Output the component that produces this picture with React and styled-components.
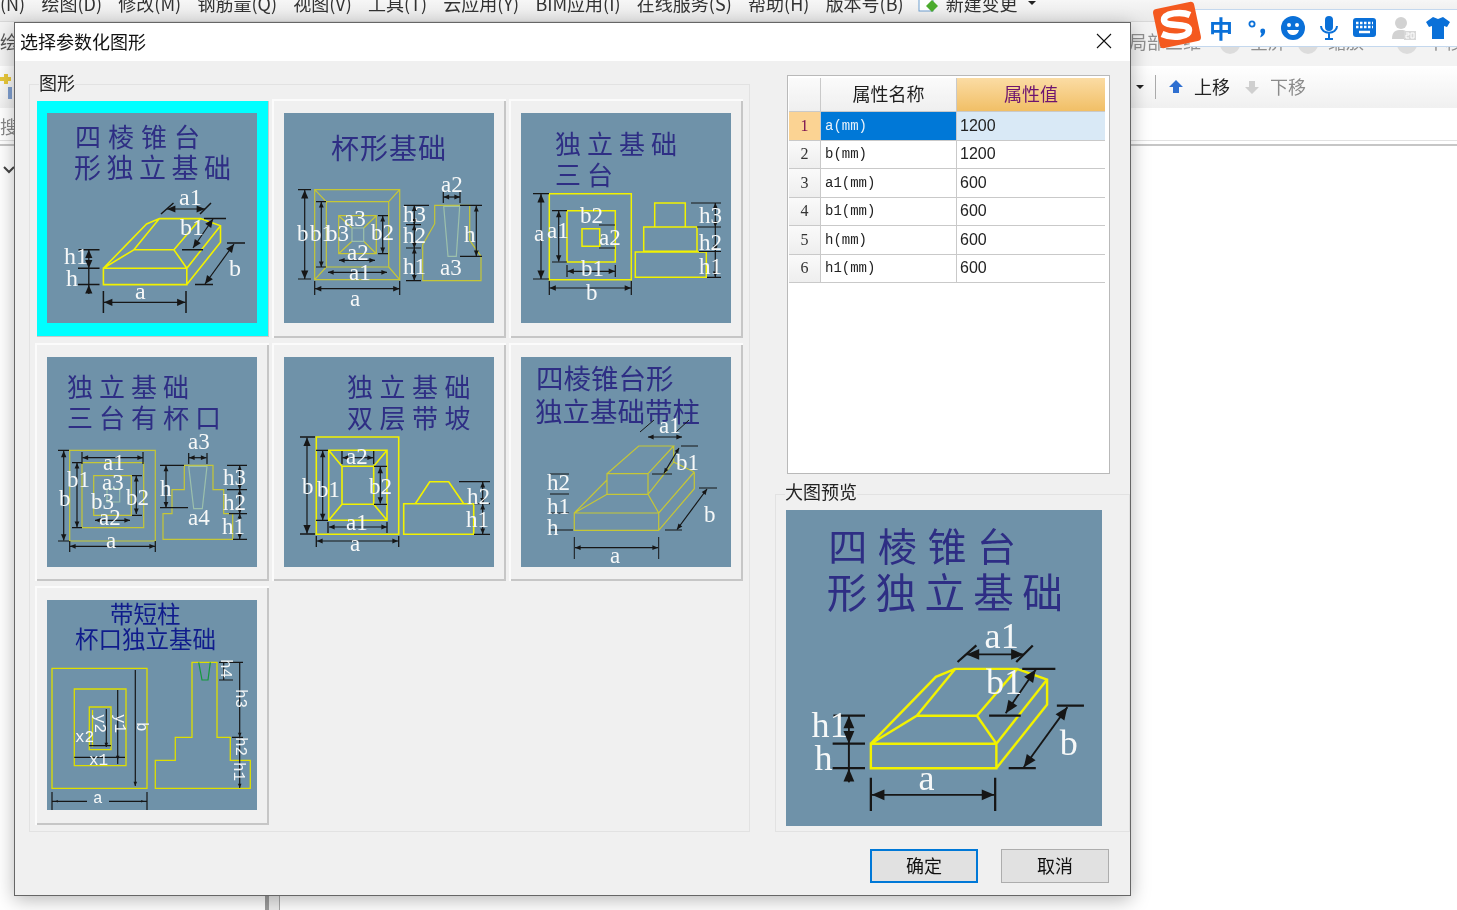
import React from 'react'
import styled, { createGlobalStyle } from 'styled-components'

const CJK = '"Noto Sans CJK SC", "Noto Sans", sans-serif'
const YELLOW = '#f2f200'
const OLIVE = '#c6c736'
const PALE = '#9cc0ac'
const INK = '#161616'

const GlobalStyle = createGlobalStyle`
  html, body { margin: 0; padding: 0; background: #fff; overflow: hidden; }
  body { font-family: ${CJK}; }
`

/* ---------- drawing helpers, all in a 210x210 space ---------- */

const Line = styled.path`
  fill: none;
  stroke: ${p => p.$c || INK};
  stroke-width: ${p => p.$w || 1.2};
`
const Head = styled.polygon`
  fill: ${INK};
`
const Dimension = styled.text`
  fill: #f6f8f8;
  font-family: "Liberation Serif", serif;
  font-size: ${p => p.$s || 23}px;
`
const Heading = styled.text`
  fill: ${p => p.$c || '#2e2e84'};
  font-family: ${CJK};
  font-size: ${p => p.$s || 26}px;
  letter-spacing: ${p => p.$sp || 0}px;
`
const Pixel = styled.text`
  fill: #f6f8f8;
  font-family: "Liberation Mono", monospace;
  font-size: 16px;
`

const Arrow = ({ x, y, fx, fy, s = 6 }) => {
  const len = Math.hypot(x - fx, y - fy) || 1
  const ux = (x - fx) / len
  const uy = (y - fy) / len
  const bx = x - ux * s * 1.4
  const by = y - uy * s * 1.4
  const nx = -uy * s * 0.6
  const ny = ux * s * 0.6
  return <Head points={`${x},${y} ${bx + nx},${by + ny} ${bx - nx},${by - ny}`} />
}

const Dim = ({ x1, y1, x2, y2, s }) => (
  <>
    <Line d={`M${x1} ${y1}L${x2} ${y2}`} />
    <Arrow x={x1} y={y1} fx={x2} fy={y2} s={s} />
    <Arrow x={x2} y={y2} fx={x1} fy={y1} s={s} />
  </>
)

const Labels = ({ items, s }) => items.map(([t, x, y]) => (
  <Dimension key={`${t}${x}${y}`} x={x} y={y} $s={s}>{t}</Dimension>
))

/* ---------- the seven foundation figures ---------- */

const Pyramid = () => (
  <>
    <Heading x="28" y="34" $sp="7">四棱锥台</Heading>
    <Heading x="27" y="65" $s="27" $sp="5.5">形独立基础</Heading>
    <Line $c={YELLOW} $w="1.6" d="M56.4 155.300H139.800V171.600H56.400ZM139.800 171.600L173.500 129.300V112.700L153.600 105.600H112.400L99.600 110.900L56.400 155.300L86.900 136.700H126.900L139.800 155.300L173.500 112.700M86.900 136.700L112.400 105.600M126.900 136.700L153.600 105.600" />
    <Line $w="1.500" d="M56.400 178V200M139 178V200M31.500 136.700H52.500M31 155.300H52.500M31 171.600H52.500M114 101L126.500 90M153 101L164 90M157 105.600H179M135 136.700H156M180 130H198M148 171.500H166" />
    <Dim x1={57} y1={189.300} x2={138.500} y2={189.300} />
    <Dim x1={41.800} y1={136.700} x2={41.800} y2={155.300} />
    <Line $w="1.300" d="M41.800 155.300V181" />
    <Arrow x={41.800} y={172} fx={41.800} fy={182} />
    <Dim x1={120} y1={96} x2={158} y2={96} />
    <Dim x1={166} y1={106} x2={146} y2={135} />
    <Dim x1={187} y1={131} x2={158} y2={171} />
    <Labels s={24} items={[['h1', 17, 151], ['h', 19, 172.700], ['a', 88, 186], ['a1', 132, 91.600], ['b1', 133, 122], ['b', 182, 163]]} />
  </>
)

const CupBase = () => (
  <>
    <Heading x="47" y="46" $s="28" $sp="1">杯形基础</Heading>
    <Line $c={OLIVE} d="M30.700 76.700H115.700V166.700H30.700ZM42.300 88.700H104.700V154H42.300ZM54.700 102.700H92.300V140.700H54.700ZM30.700 76.700L42.300 88.700M115.700 76.700L104.700 88.700M30.700 166.700L42.300 154M115.700 166.700L104.700 154M54.700 102.700L68 115M92.300 102.700L79.700 115M54.700 140.700L68 128.300M92.300 140.700L79.700 128.300M150.700 92.300H185.700V127.300L197 143.300V167.700H138.700V131.700L150.700 110.700Z" />
    <Line $c={PALE} d="M68 115H79.700V128.300H68ZM159.700 93.300H175.700L172.300 143.300H164Z" />
    <Line d="M14 76.700H27M14 166H27M32 88.700H42M32 154H42M94 102.700H104M94 140.700H104M30.700 168V182M115.700 168V182M120 92.300H145M122 111.700H137M122 135H137M122 167.700H137M176 92.300H198M176 143.300H198M159.300 79V90M176 79V90" />
    <Dim x1={20.700} y1={77} x2={20.700} y2={166} />
    <Dim x1={37.300} y1={89} x2={37.300} y2={154} s={4} />
    <Dim x1={98.700} y1={103} x2={98.700} y2={140} s={4} />
    <Dim x1={31} y1={175.700} x2={115.500} y2={175.700} s={4.500} />
    <Dim x1={44} y1={159.300} x2={103} y2={159.300} s={4} />
    <Dim x1={55} y1={147.300} x2={91} y2={147.300} s={4} />
    <Dim x1={159.500} y1={84} x2={176} y2={84} s={4} />
    <Dim x1={192.300} y1={93} x2={192.300} y2={143} s={4} />
    <Dim x1={130.300} y1={92.500} x2={130.300} y2={111.700} s={4} />
    <Dim x1={130.300} y1={111.700} x2={130.300} y2={135} s={4} />
    <Dim x1={130.300} y1={135} x2={130.300} y2={167.500} s={4} />
    <Labels items={[['b', 13, 128], ['b1', 26, 128], ['b3', 42, 128], ['a3', 60, 113], ['b2', 87, 127], ['a2', 63, 147], ['a1', 65, 167], ['a', 66, 193], ['a2', 157, 79], ['h3', 119, 109], ['h2', 119, 130], ['h1', 119, 161], ['h', 180, 129], ['a3', 156, 162]]} />
  </>
)

const ThreeStep = () => (
  <>
    <Heading x="34" y="41" $sp="6">独立基础</Heading>
    <Heading x="34" y="72" $sp="6">三台</Heading>
    <Line $c={YELLOW} $w="1.500" d="M28.300 80.700H110.300V166.700H28.300ZM46 97.700H94.300V149H46ZM61 115.700H78.700V133.300H61ZM133.700 90H164.300V114H133.700ZM122.700 114H176V138.300H122.700ZM114.300 139H185.300V164.300H114.300Z" />
    <Line d="M12 80.700H28M12 166H28M31 97.700H46M31 149H46M28.300 168V182M110.300 168V182M46 152V164M94.300 152V164M170 90H200M176 114H200M178 138.500H200M186 164.300H200M78 112H94M78 135H94" />
    <Dim x1={20} y1={81} x2={20} y2={166} />
    <Dim x1={37.700} y1={98} x2={37.700} y2={148.500} s={4.500} />
    <Dim x1={28.500} y1={175} x2={110} y2={175} s={4.500} />
    <Dim x1={46.500} y1={158.300} x2={94} y2={158.300} s={4.500} />
    <Line d="M194.300 90V164.300" />
    <Arrow x={194.300} y={90} fx={194.300} fy={114} s={4} />
    <Arrow x={194.300} y={114} fx={194.300} fy={90} s={4} />
    <Arrow x={194.300} y={138} fx={194.300} fy={116} s={4} />
    <Arrow x={194.300} y={164} fx={194.300} fy={140} s={4} />
    <Labels items={[['a', 13, 128], ['a1', 26, 125], ['b2', 59, 110], ['a2', 78, 132], ['b1', 60, 163], ['b', 65, 187], ['h3', 178, 110], ['h2', 178, 137], ['h1', 178, 161]]} />
  </>
)

const ThreeStepCup = () => (
  <>
    <Heading x="20" y="40" $sp="6">独立基础</Heading>
    <Heading x="20" y="71" $sp="6">三台有杯口</Heading>
    <Line $c={OLIVE} d="M22.700 93.300H108.300V184H22.700ZM35 105.700H96.700V170.700H35ZM46.700 118.700H84.300V158.300H46.700ZM137.300 108.300H166V132.700H176.700V156.700H185.700V182.300H116V156.700H125V132.700H137.300Z" />
    <Line $c={PALE} d="M60 131.700H72.700V145H60ZM141.700 109.300H160L155.300 151.700H146.700Z" />
    <Line d="M11 93.300H22M11 184H22M25 105.700H35M25 170.700H35M85 118.700H95M85 158.300H95M35 95V107M96 95V107M22.700 184V195M108.300 184V195M141.700 96V107M160 96V107M113 108.300H137M113 150.700H141M180 108.300H200M180 132.700H200M182 156.700H200M186 182.300H200" />
    <Dim x1={35.500} y1={100.700} x2={96} y2={100.700} s={4} />
    <Dim x1={16.700} y1={94} x2={16.700} y2={183.500} s={4.500} />
    <Dim x1={30} y1={106} x2={30} y2={170} s={4} />
    <Dim x1={89.300} y1={119} x2={89.300} y2={157} s={4} />
    <Dim x1={48} y1={163.300} x2={83} y2={163.300} s={4} />
    <Dim x1={23} y1={189.300} x2={108} y2={189.300} s={4} />
    <Dim x1={142} y1={100.700} x2={159.500} y2={100.700} s={4} />
    <Dim x1={119} y1={108.700} x2={119} y2={150.500} s={4} />
    <Dim x1={192.700} y1={108.500} x2={192.700} y2={132.700} s={3.500} />
    <Dim x1={192.700} y1={132.700} x2={192.700} y2={156.700} s={3.500} />
    <Dim x1={192.700} y1={156.700} x2={192.700} y2={182} s={3.500} />
    <Labels items={[['a3', 141, 92], ['a1', 56, 113], ['b1', 20, 130], ['a3', 55, 133], ['b3', 44, 152], ['b2', 79, 148], ['b', 12, 149], ['a2', 52, 168], ['a', 59, 191], ['h', 113, 139], ['a4', 141, 168], ['h3', 176, 128], ['h2', 176, 153], ['h1', 175, 177]]} />
  </>
)

const DoubleSlope = () => (
  <>
    <Heading x="63" y="40" $sp="6.500">独立基础</Heading>
    <Heading x="63" y="71" $sp="6.500">双层带坡</Heading>
    <Line $c={YELLOW} $w="1.600" d="M32.300 80H114.700V177.300H32.300ZM44.700 93.300H103V163.300H44.700ZM58 109.300H89.700V147.300H58ZM44.700 93.300L58 109.300M103 93.300L89.700 109.300M44.700 163.300L58 147.300M103 163.300L89.700 147.300M119.700 146.700H189.700V177.300H119.700ZM131.300 146.700L145.700 124.700H164.700L179.700 146.700" />
    <Line $w="1.300" d="M16 80H31M16 177H31M32 93.300H44M32 163.300H44M90 109.300H103M90 147.300H103M58 94V107M89.700 94V107M44 165V176M103 165V176M32.300 179V190M114.700 179V190M175 124.700H206M190 146.700H206M190 177.300H206" />
    <Dim x1={23} y1={80.500} x2={23} y2={176.500} />
    <Dim x1={38.700} y1={94} x2={38.700} y2={163} s={4.500} />
    <Dim x1={96.300} y1={110} x2={96.300} y2={146.500} s={4.500} />
    <Dim x1={58.500} y1={100.700} x2={89} y2={100.700} s={4} />
    <Dim x1={45} y1={170} x2={103} y2={170} s={4} />
    <Dim x1={33} y1={184} x2={114} y2={184} s={4} />
    <Dim x1={198.700} y1={125} x2={198.700} y2={146.500} s={4} />
    <Dim x1={198.700} y1={147} x2={198.700} y2={177} s={4} />
    <Labels items={[['b', 18, 137], ['b1', 33, 140], ['a2', 62, 107], ['b2', 85, 137], ['a1', 62, 173], ['a', 66, 194], ['h2', 183, 147], ['h1', 182, 170]]} />
  </>
)

const SlopeColumn = () => (
  <>
    <Heading x="15" y="32" $s="27.500">四棱锥台形</Heading>
    <Heading x="14" y="65" $s="27.500">独立基础带柱</Heading>
    <Line $c={OLIVE} d="M53.300 156H137.700V173.300H53.300ZM137.700 173.300L173.300 131.700V115M137.700 156L173.300 115M86 116.700H127V137.300H86ZM86 116.700L117.700 89H152.700L127 116.700M152.700 89V105L173.300 115M127 137.300L152.700 105M53.300 156L86 137.300M53.300 156L86 123M127 137.300L137.700 156" />
    <Line $w="1" d="M53.300 180V202M137.700 180V202M178 131H196M144 173H161M119 75L133 63M155 75L168 63M160 89H177M131 117H151M29 117H48M29 137H48M29 156H48M29 173H52" />
    <Dim x1={54} y1={190.700} x2={137} y2={190.700} s={4} />
    <Dim x1={186} y1={132} x2={156} y2={172.500} s={4} />
    <Dim x1={127} y1={80} x2={161} y2={80} s={4} />
    <Dim x1={158} y1={91} x2={143} y2={116} s={3.500} />
    <Labels items={[['a1', 138, 76], ['b1', 155, 113], ['b', 183, 165], ['a', 89, 206], ['h2', 26, 133], ['h1', 26, 157], ['h', 26, 178]]} />
  </>
)

const Rotated = ({ x, y, children }) => (
  <Pixel transform={`translate(${x} ${y}) rotate(90)`}>{children}</Pixel>
)

const ShortColumn = () => (
  <>
    <Heading x="63" y="23" $s="23.500" $c="#101c8c">带短柱</Heading>
    <Heading x="28" y="48" $s="23.500" $c="#101c8c">杯口独立基础</Heading>
    <Line $c="#dede00" $w="1.300" d="M5 68.300H100V188.300H5ZM27.300 89H79V165.700H27.300ZM42.300 107H64V149.700H42.300ZM45.500 110V147M108.300 188.300V160.300H128.300V137.300H145V62.300H170V137.300H183.300V160.300H203.300V188.300Z" />
    <Line $c="#149a3c" d="M151.700 62.300L155 80H161L163.300 62.300" />
    <Line d="M5 192V211M100 192V211M5 201.300H40M62 201.300H100M88.300 70V186M70.700 90V164M59.300 109V147M27.300 157.300H78M42.300 145.700H64M192.700 62.300V188M172 62.300H196M172 80H186M176.700 62.300V80M185 137.300H196" />
    <Arrow x={8} y={201.300} fx={16} fy={201.300} s={2} />
    <Arrow x={97} y={201.300} fx={88} fy={201.300} s={2} />
    <Arrow x={70.700} y={160} fx={70.700} fy={150} s={3} />
    <Arrow x={59.300} y={147} fx={59.300} fy={137} s={3} />
    <Arrow x={88.300} y={186} fx={88.300} fy={176} s={3} />
    <Arrow x={192.700} y={137} fx={192.700} fy={127} s={3} />
    <Arrow x={192.700} y={188} fx={192.700} fy={178} s={3} />
    <Rotated x={48} y={114}>y2</Rotated>
    <Rotated x={68} y={114}>y1</Rotated>
    <Rotated x={90} y={122}>b</Rotated>
    <Rotated x={174} y={59}>h4</Rotated>
    <Rotated x={189} y={89}>h3</Rotated>
    <Rotated x={189} y={137}>h2</Rotated>
    <Rotated x={187} y={162}>h1</Rotated>
    <Pixel x="28" y="142">x2</Pixel>
    <Pixel x="42" y="165">x1</Pixel>
    <Pixel x="46" y="203">a</Pixel>
  </>
)

const figures = [Pyramid, CupBase, ThreeStep, ThreeStepCup, DoubleSlope, SlopeColumn, ShortColumn]

const rows = [
  ['a(mm)', '1200'],
  ['b(mm)', '1200'],
  ['a1(mm)', '600'],
  ['b1(mm)', '600'],
  ['h(mm)', '600'],
  ['h1(mm)', '600'],
]

const menus = ['绘图(D)', '修改(M)', '钢筋量(Q)', '视图(V)', '工具(T)', '云应用(Y)', 'BIM应用(I)', '在线服务(S)', '帮助(H)', '版本号(B)']

const ribbonTools = [
  ['局部三维', 0],
  ['全屏', 49],
  ['缩放', 42],
  ['平移', 63],
]

/* ---------- app behind the dialog ---------- */

const Shell = styled.div`
  position: relative;
  width: 1457px;
  height: 910px;
  overflow: hidden;
  display: flex;
  flex-direction: column;
  background: #fff;
  filter: blur(0.35px);
`
const MenuBar = styled.div`
  height: 22px;
  flex: none;
  display: flex;
  background: linear-gradient(#f6f6f6, #e9e9e9);
  border-bottom: 1px solid #d8d8d8;
  box-sizing: border-box;
  overflow: hidden;
  color: #333;
  font-size: 18px;
  line-height: 6px;
`
const MenuItem = styled.span`
  margin-left: ${p => p.$gap}px;
  white-space: nowrap;
`
const Ribbon = styled.div`
  height: 44px;
  flex: none;
  box-sizing: border-box;
  display: flex;
  align-items: center;
  justify-content: space-between;
  padding-bottom: 6px;
  background: #f3f3f3;
  color: #8f8f8f;
  font-size: 18px;
`
const RibbonLeft = styled.span`
  color: #555;
`
const RibbonGroup = styled.div`
  display: flex;
  margin-right: -6px;
`
const RibbonTool = styled.span`
  position: relative;
  margin-left: ${p => p.$gap}px;
  &:not(:first-child)::before {
    content: '';
    position: absolute;
    top: 6px;
    left: -30px;
    width: 20px;
    height: 20px;
    border-radius: 50%;
    background: #dcdcdc;
  }
`
const Toolbar = styled.div`
  height: 42px;
  flex: none;
  display: flex;
  align-items: center;
  justify-content: space-between;
  padding-right: 151px;
  background: linear-gradient(#ffffff, #f0f0f0);
  font-size: 18px;
  color: #333;
`
const ToolGroup = styled.div`
  display: flex;
  align-items: center;
`
const Caret = styled.span`
  width: 0;
  height: 0;
  border: 4px solid transparent;
  border-top: 4px solid #222;
  border-bottom: 0;
`
const MenuCaret = styled(Caret)`
  margin: 1px 0 0 10px;
`
const ToolDivider = styled.span`
  width: 1px;
  height: 24px;
  margin: 0 12px 0 11px;
  background: #aaa;
`
const ToolLabel = styled.span`
  margin: 0 ${p => (p.$off ? 0 : 14)}px 2px 10px;
  color: ${p => (p.$off ? '#8a8a8a' : '#222')};
`
const SearchRow = styled.div`
  height: 32px;
  flex: none;
  color: #888;
  font-size: 18px;
  line-height: 36px;
  overflow: hidden;
`
const Rule = styled.div`
  height: 6px;
  flex: none;
  box-sizing: border-box;
  border-top: 1px solid #e2e2e2;
  border-bottom: 2px solid #c6c6c6;
`
const Workspace = styled.div`
  flex: 1;
  display: flex;
`
const Sidebar = styled.div`
  width: 269px;
  box-sizing: border-box;
  border-right: 4px solid #9d9d9d;
  padding: 9px 0 0 3px;
`
const Splitter = styled.div`
  width: 10px;
  background: #ececec;
  border-right: 1px solid #a8a8a8;
`

/* ---------- input method bar ---------- */

const ImeBar = styled.div`
  position: absolute;
  top: 9px;
  left: 1190px;
  right: 0;
  height: 38px;
  box-sizing: border-box;
  display: flex;
  align-items: center;
  padding-left: 19px;
  gap: 15px;
  background: #fff;
  border-top: 1px solid #c4d8ee;
  border-bottom: 1px solid #c4d8ee;
`
const ImeLogo = styled.svg`
  position: absolute;
  top: 1px;
  left: 1151px;
  width: 52px;
  height: 48px;
`
const ImeText = styled.span`
  color: #0a70d8;
  font-size: 24px;
  font-weight: 700;
  line-height: 1;
`
const ImeIcon = styled.svg`
  flex: none;
  width: ${p => p.$w || 24}px;
  height: 24px;
  margin-left: ${p => p.$shift || 0}px;
`

/* ---------- dialog ---------- */

const Dialog = styled.div`
  position: absolute;
  top: 22px;
  left: 14px;
  width: 1117px;
  height: 874px;
  box-sizing: border-box;
  display: flex;
  flex-direction: column;
  background: #f0f0f0;
  border: 1px solid #666;
  box-shadow: 0 4px 18px rgba(0, 0, 0, 0.28);
`
const TitleBar = styled.div`
  height: 38px;
  flex: none;
  box-sizing: border-box;
  display: flex;
  align-items: center;
  justify-content: space-between;
  padding: 0 18px 3px 5px;
  background: #fff;
  color: #111;
  font-size: 18px;
`
const CloseIcon = styled.svg`
  width: 16px;
  height: 16px;
  stroke: #111;
  stroke-width: 1.1;
`
const Body = styled.div`
  display: flex;
  gap: 25px;
  padding: 14px 0 0 14px;
`
const Group = styled.div`
  position: relative;
  box-sizing: border-box;
  border: 1px solid #e2e2e2;
`
const ShapeGroup = styled(Group)`
  width: 721px;
  height: 748px;
  margin-top: 9px;
  padding: 16px 0 0 8px;
`
const GroupLabel = styled.span`
  position: absolute;
  top: ${p => p.$top}px;
  left: ${p => p.$left}px;
  background: #f0f0f0;
  color: #222;
  font-size: 18px;
  line-height: 22px;
`
const TileGrid = styled.div`
  display: grid;
  grid-template-columns: repeat(3, 231px);
  grid-auto-rows: 238px;
  gap: 5.500px 6px;
`
const Tile = styled.div`
  box-sizing: border-box;
  margin: ${p => (p.$selected ? '0 0 2px -1px' : '-2px 0 1.500px -3px')};
  padding: ${p => (p.$selected ? '12px 11px 14px 10px' : '14px 11px 14px 12px')};
  background: ${p => (p.$selected ? '#00ffff' : '#f0f0f0')};
  box-shadow: ${p => (p.$selected
    ? 'inset -1px -1px 0 #c8c8c8'
    : 'inset 2px 2px 0 #fbfbfb, inset -2px -2px 0 #c6c6c6')};
`
const Figure = styled.svg`
  display: block;
  width: ${p => p.$size}px;
  height: ${p => p.$size}px;
  background: #6f92a9;
`
const SideColumn = styled.div`
  width: 355px;
`

/* ---------- property table ---------- */

const TableBox = styled.div`
  width: 323px;
  height: 399px;
  margin-left: 12px;
  box-sizing: border-box;
  padding: 2px 4px 0 1px;
  background: #fff;
  border: 1px solid #b9b9b9;
`
const Table = styled.div`
  display: grid;
  grid-template-columns: 31px 135px 148px;
  grid-template-rows: 33px repeat(6, 27.500px);
  gap: 1px;
  padding-bottom: 1px;
  background: #c9c9c9;
`
const HeadCell = styled.div`
  display: flex;
  align-items: center;
  justify-content: center;
  padding-bottom: 3px;
  font-size: 18px;
  color: ${p => (p.$active ? '#6d1470' : '#1e1e1e')};
  background: ${p => (p.$active
    ? 'linear-gradient(#fbdca4, #f1bf66)'
    : 'linear-gradient(#fbfbfb, #efefef)')};
`
const RowHead = styled.div`
  display: flex;
  align-items: center;
  justify-content: center;
  font-family: "Liberation Serif", serif;
  font-size: 16px;
  color: ${p => (p.$active ? '#7a1050' : '#333')};
  background: ${p => (p.$active ? '#fbd393' : 'linear-gradient(#fafafa, #eeeeee)')};
`
const NameCell = styled.div`
  display: flex;
  align-items: center;
  padding-left: 4px;
  font-family: "Liberation Mono", monospace;
  font-size: 14px;
  color: ${p => (p.$active ? '#e8f2fb' : '#222')};
  background: ${p => (p.$active ? '#0078d7' : '#fff')};
`
const ValueCell = styled.div`
  display: flex;
  align-items: center;
  padding-left: 3px;
  font-family: "Liberation Sans", sans-serif;
  font-size: 16px;
  color: #222;
  background: ${p => (p.$active ? '#d9e9f6' : '#fff')};
`

/* ---------- preview and buttons ---------- */

const PreviewGroup = styled(Group)`
  height: 338px;
  margin-top: 20px;
  padding: 15px 0 0 10px;
`
const Footer = styled.div`
  display: flex;
  justify-content: flex-end;
  gap: 23px;
  padding: 17px 21px 0 0;
`
const Button = styled.button`
  width: 108px;
  height: 34px;
  padding: 0 0 3px;
  box-sizing: border-box;
  font-family: ${CJK};
  font-size: 18px;
  color: #111;
  background: #e1e1e1;
  border: ${p => (p.$primary ? '2px solid #0078d7' : '1px solid #adadad')};
  border-radius: 0;
`

const App = () => {
  const Preview = figures[0]
  return (
    <Shell>
      <GlobalStyle />
      <MenuBar>
        <MenuItem $gap={0}>(N)</MenuItem>
        {menus.map(label => (
          <MenuItem key={label} $gap={16.3}>{label}</MenuItem>
        ))}
        <svg width="22" height="14" viewBox="0 0 22 14" style={{ marginLeft: 14 }}>
          <rect x="1" y="-6" width="14" height="17" fill="#fff" stroke="#6f9fd0" />
          <path d="M14 0l6 6-6 6-6-6z" fill="#4cab2e" />
        </svg>
        <MenuItem $gap={6}>新建变更</MenuItem>
        <MenuCaret />
      </MenuBar>
      <Ribbon>
        <RibbonLeft>绘</RibbonLeft>
        <RibbonGroup>
          {ribbonTools.map(([label, gap]) => (
            <RibbonTool key={label} $gap={gap}>{label}</RibbonTool>
          ))}
        </RibbonGroup>
      </Ribbon>
      <Toolbar>
        <svg width="12" height="28" viewBox="0 0 12 28">
          <path d="M-2 4h6v-3h4v3h3v4h-3v3h-4v-3h-6z" fill="#e8c83c" />
          <rect x="8" y="14" width="6" height="12" fill="#7f9fd0" />
        </svg>
        <ToolGroup>
          <Caret />
          <ToolDivider />
          <svg width="16" height="16" viewBox="0 0 16 16"><path d="M8 1l7 7h-4v6H5V8H1z" fill="#2f6fd0" /></svg>
          <ToolLabel>上移</ToolLabel>
          <svg width="16" height="16" viewBox="0 0 16 16"><path d="M8 15l7-7h-4V2H5v6H1z" fill="#cfcfcf" /></svg>
          <ToolLabel $off>下移</ToolLabel>
        </ToolGroup>
      </Toolbar>
      <SearchRow>搜</SearchRow>
      <Rule />
      <Workspace>
        <Sidebar>
          <svg width="12" height="8" viewBox="0 0 12 8"><path d="M1 1l5 5 5-5" fill="none" stroke="#444" strokeWidth="2" /></svg>
        </Sidebar>
        <Splitter />
      </Workspace>

      <ImeBar>
        <ImeText>中</ImeText>
        <ImeIcon $w={18} viewBox="0 0 18 24">
          <circle cx="4" cy="8" r="2.600" fill="none" stroke="#0a70d8" strokeWidth="1.800" />
          <path d="M13 13c4-2 5 2 3.500 5-1 2-3 3-4.500 3.500l1.500-4c-1.500-1-1.500-3.500-.5-4.500z" fill="#0a70d8" />
        </ImeIcon>
        <ImeIcon viewBox="0 0 24 24">
          <circle cx="12" cy="12" r="12" fill="#0a70d8" />
          <circle cx="8" cy="9" r="2" fill="#fff" />
          <circle cx="16" cy="9" r="2" fill="#fff" />
          <path d="M6 14h12c-1 4-3.500 5-6 5s-5-1-6-5z" fill="#fff" />
        </ImeIcon>
        <ImeIcon $w={18} viewBox="0 0 18 24">
          <rect x="5" y="0" width="8" height="15" rx="4" fill="#0a70d8" />
          <path d="M1 10c0 9 16 9 16 0M9 17v5M5 23h8" fill="none" stroke="#0a70d8" strokeWidth="2" />
        </ImeIcon>
        <ImeIcon viewBox="0 0 24 24">
          <rect x="0" y="2" width="23" height="19" rx="3" fill="#0a70d8" />
          <path d="M3 7h17M3 11h17" stroke="#fff" strokeWidth="2.500" strokeDasharray="2.500 1.500" />
          <path d="M6 16h11" stroke="#fff" strokeWidth="2.500" />
        </ImeIcon>
        <ImeIcon viewBox="0 0 24 24">
          <circle cx="9" cy="7" r="6" fill="#d2d2d2" />
          <path d="M0 23c0-8 4-9 9-9s5 1 5 3v6z" fill="#d2d2d2" />
          <rect x="12" y="15" width="12" height="9" fill="#d8d8d8" />
          <path d="M14 17h3v2h-3v3h3M19 17h3v5h-3z" fill="none" stroke="#fff" />
        </ImeIcon>
        <ImeIcon $shift={-5} viewBox="0 0 24 24">
          <path d="M7 1l5 2 5-2 7 5-3 5-3-1v13H6V10l-3 1-3-5z" fill="#0a70d8" />
        </ImeIcon>
      </ImeBar>
      <ImeLogo viewBox="0 0 52 48">
        <rect x="5" y="4" width="42" height="40" rx="4" fill="#f4591f" transform="rotate(-12 26 24)" />
        <path d="M39 14C30 10 13 12 13 19C13 27 38 21 38 29C38 36 22 38 11 33" fill="none" stroke="#fff" strokeWidth="6.500" />
      </ImeLogo>

      <Dialog>
        <TitleBar>
          选择参数化图形
          <CloseIcon viewBox="0 0 16 16"><path d="M1 1l14 14M15 1L1 15" /></CloseIcon>
        </TitleBar>
        <Body>
          <ShapeGroup>
            <GroupLabel $left={9} $top={-14}>图形</GroupLabel>
            <TileGrid>
              {figures.map((Shape, i) => (
                <Tile key={i} $selected={i === 0}>
                  <Figure $size={210} viewBox="0 0 210 210"><Shape /></Figure>
                </Tile>
              ))}
            </TileGrid>
          </ShapeGroup>
          <SideColumn>
            <TableBox>
              <Table>
                <HeadCell />
                <HeadCell>属性名称</HeadCell>
                <HeadCell $active>属性值</HeadCell>
                {rows.map(([name, value], i) => (
                  <React.Fragment key={name}>
                    <RowHead $active={i === 0}>{i + 1}</RowHead>
                    <NameCell $active={i === 0}>{name}</NameCell>
                    <ValueCell $active={i === 0}>{value}</ValueCell>
                  </React.Fragment>
                ))}
              </Table>
            </TableBox>
            <PreviewGroup>
              <GroupLabel $left={9} $top={-15}>大图预览</GroupLabel>
              <Figure $size={316} viewBox="0 0 210 210"><Preview /></Figure>
            </PreviewGroup>
          </SideColumn>
        </Body>
        <Footer>
          <Button $primary>确定</Button>
          <Button>取消</Button>
        </Footer>
      </Dialog>
    </Shell>
  )
}

export default App
